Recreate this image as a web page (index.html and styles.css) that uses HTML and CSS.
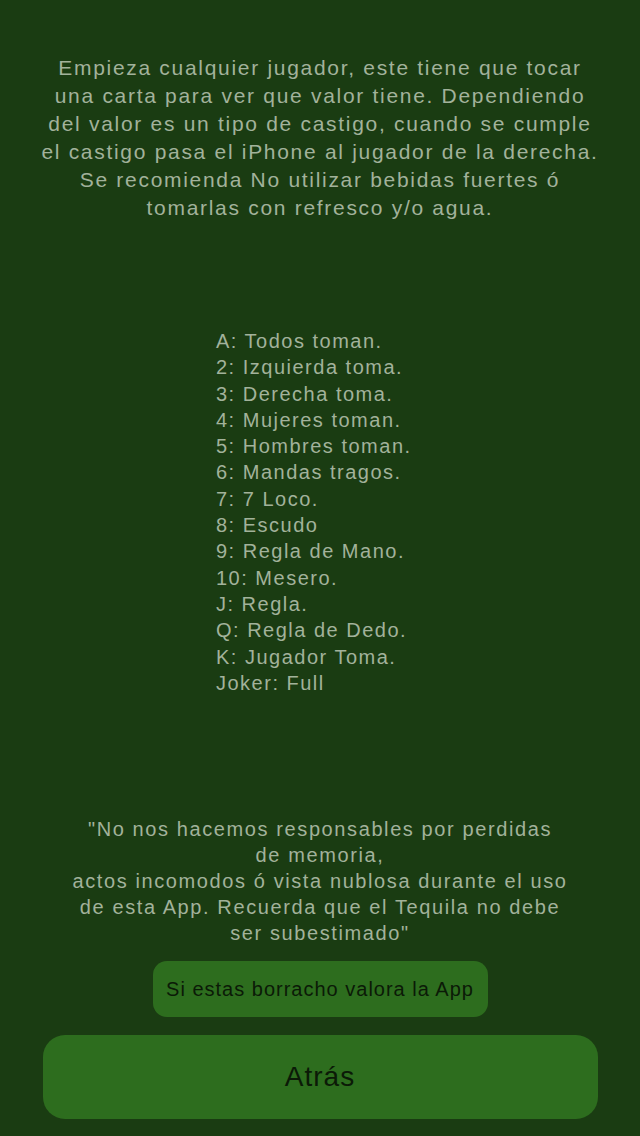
FILE: index.html
```html
<!DOCTYPE html>
<html lang="es">
<head>
<meta charset="utf-8">
<title>Reglas</title>
<link rel="stylesheet" href="styles.css">
</head>
<body>
<main class="screen">
  <p class="intro">Empieza cualquier jugador, este tiene que tocar<br>una carta para ver que valor tiene. Dependiendo<br>del valor es un tipo de castigo, cuando se cumple<br>el castigo pasa el iPhone al jugador de la derecha.<br>Se recomienda No utilizar bebidas fuertes ó<br>tomarlas con refresco y/o agua.</p>
  <ul class="rules">
    <li>A: Todos toman.</li>
    <li>2: Izquierda toma.</li>
    <li>3: Derecha toma.</li>
    <li>4: Mujeres toman.</li>
    <li>5: Hombres toman.</li>
    <li>6: Mandas tragos.</li>
    <li>7: 7 Loco.</li>
    <li>8: Escudo</li>
    <li>9: Regla de Mano.</li>
    <li>10: Mesero.</li>
    <li>J: Regla.</li>
    <li>Q: Regla de Dedo.</li>
    <li>K: Jugador Toma.</li>
    <li>Joker: Full</li>
  </ul>
  <p class="disclaimer">"No nos hacemos responsables por perdidas<br>de memoria,<br>actos incomodos ó vista nublosa durante el uso<br>de esta App. Recuerda que el Tequila no debe<br>ser subestimado"</p>
  <button class="btn btn-rate" type="button">Si estas borracho valora la App</button>
  <button class="btn btn-back" type="button">Atrás</button>
</main>
</body>
</html>
```

FILE: styles.css
```css
html, body {
  margin: 0;
  padding: 0;
  background: #1a3c12;
}
body {
  width: 640px;
  height: 1136px;
  overflow: hidden;
  font-family: "Liberation Sans", Arial, sans-serif;
  color: #a2b29b;
}
.screen {
  display: flex;
  flex-direction: column;
  align-items: center;
  padding-top: 54px;
}
.intro {
  margin: 0;
  font-size: 21px;
  letter-spacing: 1.7px;
  line-height: 28px;
  text-align: center;
  white-space: nowrap;
}
.rules {
  list-style: none;
  margin: 106px 0 0 0;
  padding: 0 0 0 216px;
  align-self: stretch;
  font-size: 20px;
  letter-spacing: 1.5px;
  line-height: 26.3px;
}
.disclaimer {
  margin: 120px 0 0 0;
  font-size: 20px;
  letter-spacing: 1.6px;
  line-height: 26px;
  text-align: center;
  white-space: nowrap;
}
.btn {
  border: none;
  background: #2d6d1e;
  color: #0b1a07;
  font-family: "Liberation Sans", Arial, sans-serif;
  padding: 0;
  display: flex;
  align-items: center;
  justify-content: center;
}
.btn-rate {
  margin-top: 15px;
  width: 335px;
  height: 56px;
  border-radius: 14px;
  font-size: 20px;
  letter-spacing: 1px;
}
.btn-back {
  margin-top: 18px;
  width: 555px;
  height: 84px;
  border-radius: 22px;
  font-size: 28px;
  letter-spacing: 1px;
}
```
